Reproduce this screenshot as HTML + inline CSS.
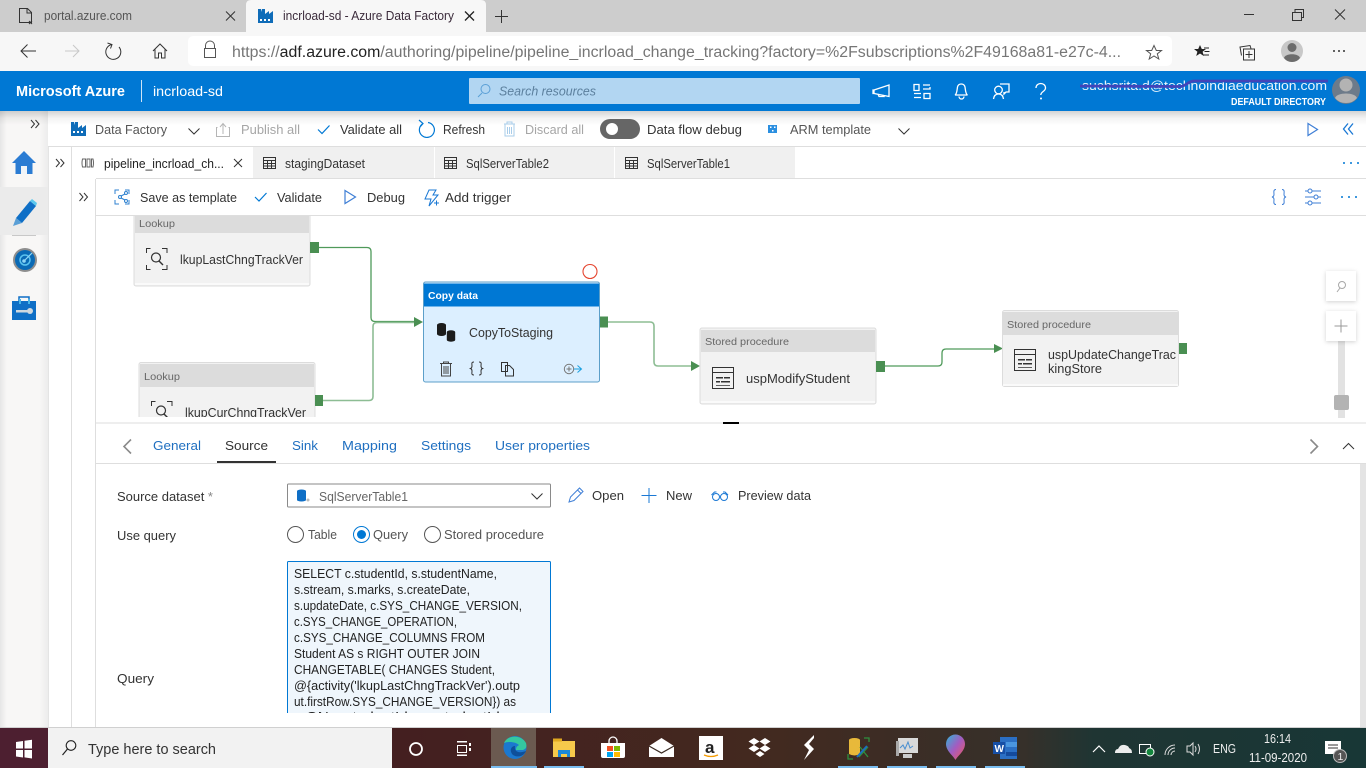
<!DOCTYPE html>
<html><head><meta charset="utf-8"><title>incrload-sd - Azure Data Factory</title>
<style>
html,body{margin:0;padding:0;width:1366px;height:768px;overflow:hidden;background:#fff}
svg{display:block}
text{font-family:"Liberation Sans",sans-serif;font-size:12.5px;fill:#333}
.s{fill:none;stroke:#333;stroke-width:1}
.b{fill:none;stroke:#0078d4;stroke-width:1.2}
.w{fill:none;stroke:#fff;stroke-width:1.3}
.g{fill:#4a8f52}
.l{fill:none;stroke:#4f9a5a;stroke-width:1.3}
.l2{fill:none;stroke:#8dbd94;stroke-width:1.6}
</style></head><body>
<svg width="1366" height="768" viewBox="0 0 1366 768" xmlns="http://www.w3.org/2000/svg">
<defs>
<linearGradient id="tb" x1="0" x2="1" y1="0" y2="0"><stop offset="0" stop-color="#4d1f30"/><stop offset=".3" stop-color="#441f20"/><stop offset=".55" stop-color="#43291f"/><stop offset=".75" stop-color="#36302a"/><stop offset=".8" stop-color="#1f3533"/><stop offset="1" stop-color="#183736"/></linearGradient>
<linearGradient id="sh" x1="0" x2="0" y1="0" y2="1"><stop offset="0" stop-color="#000" stop-opacity=".17"/><stop offset=".5" stop-color="#000" stop-opacity=".05"/><stop offset="1" stop-color="#000" stop-opacity="0"/></linearGradient>
<linearGradient id="sb" x1="0" x2="1" y1="0" y2="0"><stop offset="0" stop-color="#e6e6e6"/><stop offset=".14" stop-color="#f8f7f6"/><stop offset=".82" stop-color="#f8f7f6"/><stop offset="1" stop-color="#ececec"/></linearGradient>
<linearGradient id="pin" x1="0" x2="1" y1="0" y2="1"><stop offset="0" stop-color="#2fb5d8"/><stop offset=".5" stop-color="#a45bc0"/><stop offset="1" stop-color="#f05a5a"/></linearGradient>
<clipPath id="c1"><rect x="96" y="216" width="1270" height="201"/></clipPath>
<clipPath id="c2"><rect x="288" y="562" width="262" height="151"/></clipPath>
</defs>

<!-- browser chrome -->
<rect width="1366" height="32" fill="#cdcdcd"/>
<rect x="0" y="32" width="1366" height="39" fill="#f7f7f7"/>
<path d="M246 32V5q0-5 5-5h230q5 0 5 5v27z" fill="#f7f7f7"/>
<path class="s" d="M19.5 8.5h8l4 4v10h-12zM27 8.500v4.500h4.500" stroke="#666"/>
<path d="M29 21l3 3m0-3l-3 3" class="s"/>
<text x="44" y="20" textLength="88" lengthAdjust="spacingAndGlyphs" style="fill:#555">portal.azure.com</text>
<path class="s" d="M226 11.500l9 9m0-9l-9 9" stroke-width="1.1"/>
<path d="M258 23V9h3l1 3V9h3v5l4-3v3l4-3v12z" fill="#0f6cb8"/><rect x="260" y="19" width="2" height="2" fill="#fff"/><rect x="264" y="19" width="2" height="2" fill="#fff"/><rect x="268" y="19" width="2" height="2" fill="#fff"/>
<text x="283" y="20" textLength="171" lengthAdjust="spacingAndGlyphs" style="fill:#3b2b3b">incrload-sd - Azure Data Factory</text>
<path d="M465 11.500l9 9m0-9l-9 9" fill="none" stroke="#222" stroke-width="1.3"/>
<path class="s" d="M501.500 10v13M495 16.500h13" stroke="#444"/>
<path class="s" d="M1244 14.500h10"/><path class="s" d="M1292.500 12.500h9v8h-9zM1295 12v-2.500h8.500v8H1302"/><path class="s" d="M1335 9.500l10 10m0-10l-10 10"/>
<!-- nav -->
<path class="s" d="M36 51H21M27.500 44.500L21 51l6.500 6.500" stroke="#222"/>
<path d="M79 51H65M73 45l6 6-6 6" fill="none" stroke="#c8c8c8"/>
<path class="s" d="M112 44.500a7.500 7.500 0 1 0 7 2.500M107.500 43l4.500 1.500-1.500 4" stroke="#222"/>
<path class="s" d="M153 51l7-7 7 7M155 49.500v8.500h3.500v-5h3v5h3.500v-8.500" stroke="#222"/>
<rect x="188" y="36" width="984" height="30" rx="5" fill="#fff"/>
<path d="M205.500 48.500v-3a4.500 4.500 0 0 1 9 0v3M204.500 48.500h11v9h-11z" fill="none" stroke="#555"/>
<text x="232" y="57" textLength="889" lengthAdjust="spacingAndGlyphs" style="font-size:15.500px;fill:#767676">https://<tspan fill="#222">adf.azure.com</tspan>/authoring/pipeline/pipeline_incrload_change_tracking?factory=%2Fsubscriptions%2F49168a81-e27c-4...</text>
<path d="M1154 45.500l2.300 5h5.200l-4.200 3.300 1.500 5.200-4.800-3-4.800 3 1.500-5.200-4.200-3.300h5.200z" fill="none" stroke="#555"/>
<path d="M1200 45l1.800 4h4.200l-3.400 2.700 1.200 4.300-3.800-2.500-3.800 2.500 1.200-4.300-3.400-2.700h4.200z" fill="#222"/><path d="M1204 48h5M1204.500 51.500h5M1203 55h6" stroke="#222"/>
<path class="s" d="M1243.500 49h11v11h-11zM1249 51v7M1245.500 54.500h7M1241.500 55.500l-1.500-8.500 10-1.500 1 3" stroke="#222"/>
<circle cx="1292" cy="51" r="11" fill="#c8c8c8"/><circle cx="1292" cy="47.500" r="4.500" fill="#6c6c6c"/><path d="M1284 58c1-5 15-5 16 0q-3 4-8 4t-8-4z" fill="#6c6c6c"/>
<circle cx="1334" cy="51" r="1" fill="#333"/><circle cx="1339" cy="51" r="1" fill="#333"/><circle cx="1344" cy="51" r="1" fill="#333"/>

<!-- azure header -->
<rect y="71" width="1366" height="40" fill="#0078d4"/>
<text x="16" y="96" textLength="109" lengthAdjust="spacingAndGlyphs" style="font-size:14.500px;font-weight:bold;fill:#fff">Microsoft Azure</text>
<rect x="141" y="80" width="1" height="22" fill="#cfe4f6"/>
<text x="153" y="96" textLength="70" lengthAdjust="spacingAndGlyphs" style="font-size:13.500px;fill:#fff">incrload-sd</text>
<rect x="469" y="78" width="391" height="26" rx="1" fill="#b2d6f2"/>
<circle cx="485.500" cy="89" r="4.500" fill="none" stroke="#5a9fd6"/><path d="M482 93l-4 4" stroke="#5a9fd6"/>
<text x="499" y="95.500" textLength="97" lengthAdjust="spacingAndGlyphs" style="font-style:italic;fill:#5b7f9d">Search resources</text>
<path class="w" d="M874 90l15-5v11.500l-15-3zM874 90h-1v3.500h1M878 94l1 2.500h5l-.5-1.500"/>
<path class="w" d="M914 84.500h5v6h-5zM923 85h7M923 89h7v-2M914 93.500h7M924 93.500h6v5h-6zM914 97.500h7"/>
<path class="w" d="M955 95c2-1 2-5 2.500-8 1-4 6.500-4 7.500 0 .5 3 .5 7 2.500 8zM959 96.500a2.500 2.500 0 0 0 5 0"/>
<circle cx="998.500" cy="90" r="3.800" class="w"/><path class="w" d="M993.500 99c.5-3.500 2.500-5 5-5s4.500 1.500 5 5M1000 84h9v8h-3l-2 2v-2"/>
<path class="w" d="M1036 88c0-6 9.500-6 9.500 0 0 3.500-4.700 3.500-4.700 7" stroke-width="1.300"/><circle cx="1041" cy="98.500" r="1" fill="#fff"/>
<text x="1082" y="90" textLength="245" lengthAdjust="spacingAndGlyphs" style="font-size:13px;fill:#eaf4fc">suchsrita.d@technoindiaeducation.com</text>
<path d="M1080 86l100 .5c6 0 8-5.500 14-5.500h134" fill="none" stroke="#4344b8" stroke-width="2.800"/>
<text x="1231" y="105" textLength="95" lengthAdjust="spacingAndGlyphs" style="font-size:10px;font-weight:bold;fill:#fff">DEFAULT DIRECTORY</text>
<circle cx="1346" cy="90" r="14" fill="#6d7b8a"/><circle cx="1346" cy="85" r="6.500" fill="#b3b3b3"/><path d="M1335 98c2-6 20-6 22 0q-4 5-11 5t-11-5z" fill="#b3b3b3"/>

<!-- toolbar -->
<rect x="48" y="111" width="1318" height="35" fill="#fff"/>
<rect x="48" y="146" width="1318" height="1" fill="#dedede"/>

<!-- sidebar -->
<rect y="111" width="48" height="617" fill="url(#sb)"/>
<rect x="0" y="187" width="48" height="48" fill="#ebebeb"/>
<rect x="12" y="235" width="24" height="1" fill="#c8c8c8"/>
<rect y="111" width="1366" height="14" fill="url(#sh)"/>
<path class="s" d="M31 120l3.500 4-3.500 4M35.500 120l3.500 4-3.500 4" stroke="#444"/>
<path d="M12 163l12-12 12 12h-3.500v11h-17v-11z" fill="#2b7cd3"/><rect x="21" y="166" width="6" height="8" fill="#f0f4f8"/>
<path d="M16 218l14-17 6 5-14 17z" fill="#0f6fc6"/><path d="M30 201l2-2 5 4-1 3z" fill="#5ac8ee"/><path d="M16 218l6 5-9 3z" fill="#5a9fd6"/>
<circle cx="25" cy="260" r="12" fill="#8e8e8e"/><circle cx="25" cy="260" r="10" fill="#0a6ab5"/><circle cx="25" cy="260" r="5" fill="none" stroke="#5cc3ee" stroke-width="1.500"/><circle cx="24" cy="261" r="1.800" fill="#8fd6f4"/><path d="M25 260l7-7" stroke="#8fd6f4" stroke-width="1.200"/>
<path d="M12 301h24v19H12z" fill="#0f6fc6"/><path d="M19 301v-4h10v4" fill="none" stroke="#0f6fc6" stroke-width="1.500"/><rect x="16" y="310" width="13" height="2.500" fill="#cfd8df"/><circle cx="30" cy="311" r="3" fill="#cfd8df"/><rect x="19" y="299" width="2" height="5" fill="#4ab5e8"/><rect x="28" y="299" width="2" height="5" fill="#4ab5e8"/>

<!-- columns -->
<rect x="48" y="147" width="24" height="581" fill="#fff"/>
<rect x="48" y="147" width="1" height="581" fill="#e4e4e4"/>
<rect x="71" y="147" width="1" height="581" fill="#dedede"/>
<rect x="95" y="179" width="1" height="549" fill="#dedede"/>
<path class="s" d="M56 159l3.500 4-3.500 4M60.500 159l3.500 4-3.500 4" stroke="#444"/>
<path class="s" d="M79.500 193l3.500 4-3.500 4M84 193l3.500 4-3.500 4" stroke="#444"/>

<!-- toolbar 1 -->
<path d="M71 136v-14h3l1 3v-3h3v6l4-3v3l4-3v11z" fill="#0f6cb8"/><rect x="73" y="131" width="2" height="2" fill="#fff"/><rect x="77" y="131" width="2" height="2" fill="#fff"/><rect x="81" y="131" width="2" height="2" fill="#fff"/>
<text x="95" y="134" textLength="72" lengthAdjust="spacingAndGlyphs" style="fill:#555">Data Factory</text>
<path class="s" d="M188.500 128.500l5.500 5.500 5.500-5.500"/>
<path d="M217.500 127.500h-1v9h13v-9h-1M223 134v-10M220 127l3-3.500 3 3.500" fill="none" stroke="#b5b5b5"/>
<text x="241" y="134" textLength="59" lengthAdjust="spacingAndGlyphs" style="fill:#a6a6a6">Publish all</text>
<path class="b" d="M318 129.500l4 4 7.500-8" stroke-width="1"/>
<text x="340" y="134" textLength="62" lengthAdjust="spacingAndGlyphs">Validate all</text>
<path class="b" d="M423 123.500a7.500 7.500 0 1 0 5-1M419 120l4 3.500-3 3.500" stroke-width="1.100"/>
<text x="443" y="134" textLength="42" lengthAdjust="spacingAndGlyphs">Refresh</text>
<path d="M504 124h11M507 124v-2h5v2M505 124v12h9v-12M507.500 127v7M509.500 127v7M511.500 127v7" fill="none" stroke="#a9cdea"/>
<text x="525" y="134" textLength="59" lengthAdjust="spacingAndGlyphs" style="fill:#a6a6a6">Discard all</text>
<rect x="600" y="119" width="40" height="20" rx="10" fill="#666"/><circle cx="612" cy="129" r="6" fill="#fff"/>
<text x="647" y="134" textLength="95" lengthAdjust="spacingAndGlyphs">Data flow debug</text>
<path d="M768 125h9v8h-9z" fill="#2b8fe0"/><path d="M770 126.500h1.500v1.500H770zM774 126.500h1.500v1.500H774zM772 130h1.500v1.500H772z" fill="#fff"/>
<text x="790" y="134" textLength="81" lengthAdjust="spacingAndGlyphs" style="fill:#555">ARM template</text>
<path class="s" d="M898.500 128.500l5.500 5.500 5.500-5.500"/>
<path d="M1308 123.500l9.500 6-9.500 6z" fill="none" stroke="#3f7fd6" stroke-width="1.200"/>
<path d="M1348 123.500l-4.500 5.500 4.500 5.500M1353 123.500l-4.500 5.500 4.500 5.500" fill="none" stroke="#1a78d4" stroke-width="1.300"/>

<!-- tab row -->
<rect x="72" y="147" width="181" height="32" fill="#fff"/>
<rect x="253" y="147" width="181" height="32" fill="#f0f0f0"/>
<rect x="435" y="147" width="179" height="32" fill="#f0f0f0"/>
<rect x="615" y="147" width="180" height="32" fill="#f0f0f0"/>
<rect x="96" y="178" width="1270" height="1" fill="#dedede"/>
<path d="M82.500 159h3v8h-3q-1-4 0-8zM87 159h3v8h-3zM91.500 159h1.500q1 4 0 8h-1.500z" fill="none" stroke="#666"/>
<text x="104" y="168" textLength="120" lengthAdjust="spacingAndGlyphs" style="fill:#222">pipeline_incrload_ch...</text>
<path class="s" d="M234 159l8 8m0-8l-8 8" stroke="#555"/>
<path class="s" stroke="#666" d="M263.500 157.500h12v11h-12zM263.500 160.500h12M263.500 163.500h12M263.500 166h12M267.500 160.500v8M271.500 160.500v8"/>
<text x="285" y="168" textLength="80" lengthAdjust="spacingAndGlyphs">stagingDataset</text>
<path class="s" stroke="#666" d="M444.500 157.500h12v11h-12zM444.500 160.500h12M444.500 163.500h12M444.500 166h12M448.500 160.500v8M452.500 160.500v8"/>
<text x="466" y="168" textLength="83" lengthAdjust="spacingAndGlyphs">SqlServerTable2</text>
<path class="s" stroke="#666" d="M625.500 157.500h12v11h-12zM625.500 160.500h12M625.500 163.500h12M625.500 166h12M629.500 160.500v8M633.500 160.500v8"/>
<text x="647" y="168" textLength="83" lengthAdjust="spacingAndGlyphs">SqlServerTable1</text>
<circle cx="1344" cy="163" r="1" fill="#0078d4"/><circle cx="1351" cy="163" r="1" fill="#0078d4"/><circle cx="1358" cy="163" r="1" fill="#0078d4"/>

<!-- toolbar 2 -->
<path d="M115 194v-4h4M125 190h4v4M129 200v4h-4M119 204h-4v-4" fill="none" stroke="#2f82d0"/><circle cx="120" cy="197" r="1.500" fill="none" stroke="#2f82d0"/><circle cx="126" cy="193" r="1.500" fill="none" stroke="#2f82d0"/><circle cx="126" cy="201" r="1.500" fill="none" stroke="#2f82d0"/><path d="M121 196l4-2M121 198l4 2" stroke="#2f82d0" fill="none"/>
<text x="140" y="202" textLength="97" lengthAdjust="spacingAndGlyphs">Save as template</text>
<path class="b" d="M255 197l4 4 7.500-8" stroke-width="1"/>
<text x="277" y="202" textLength="45" lengthAdjust="spacingAndGlyphs">Validate</text>
<path d="M345 190.500l10.500 6.500-10.500 6.500z" fill="none" stroke="#3f7fd6" stroke-width="1.200"/>
<text x="367" y="202" textLength="38" lengthAdjust="spacingAndGlyphs">Debug</text>
<path d="M429 190h7l-3 5h5l-9 11 2-7h-6z" fill="none" stroke="#1a78d4"/><path d="M434 203h5M436.500 200.500v5" stroke="#1a78d4"/>
<text x="445" y="202" textLength="66" lengthAdjust="spacingAndGlyphs">Add trigger</text>
<path d="M1276 189.500c-3 0-2 3-2 5s-2 2.500-2 2.500 2 .5 2 2.500-1 5 2 5M1282 189.500c3 0 2 3 2 5s2 2.500 2 2.500-2 .5-2 2.500 1 5-2 5" fill="none" stroke="#3f7fd6"/>
<path d="M1305 191h16M1305 197h16M1305 203h16" stroke="#3f7fd6"/><circle cx="1310" cy="191" r="2" fill="#fff" stroke="#3f7fd6"/><circle cx="1316" cy="197" r="2" fill="#fff" stroke="#3f7fd6"/><circle cx="1310" cy="203" r="2" fill="#fff" stroke="#3f7fd6"/>
<circle cx="1342" cy="197" r="1" fill="#0078d4"/><circle cx="1349" cy="197" r="1" fill="#0078d4"/><circle cx="1356" cy="197" r="1" fill="#0078d4"/>
<rect x="96" y="215" width="1270" height="1" fill="#dedede"/>

<!-- canvas -->
<g clip-path="url(#c1)">
<path class="l" d="M319 247.500h48q4 0 4 4v66q0 4 4 4h40"/>
<path class="l2" d="M323 400.500h46q4 0 4-4v-70q0-4 4-4h38"/>
<path d="M414 317l9 5-9 5z" class="g"/>
<path class="l2" d="M608 322h42q4 0 4 4v36q0 4 4 4h33"/>
<path d="M691 361l9 5-9 5z" class="g"/>
<path class="l" d="M885 366h53q4 0 4-4v-9q0-4 4-4h49"/>
<path d="M994 344l9 4.500-9 4.500z" class="g"/>

<!-- Lookup 1 -->
<rect x="134" y="210" width="176" height="76" rx="2" fill="#f2f2f2" stroke="#dcdcdc"/>
<rect x="135" y="283" width="174" height="2" fill="#fafafa"/>
<rect x="135" y="216" width="174" height="17" fill="#dcdcdc"/>
<text x="139" y="227" textLength="36" lengthAdjust="spacingAndGlyphs" style="font-size:10.500px;fill:#666">Lookup</text>
<path d="M146.500 253v-4.500h4M162 248.500h5v4.500M146.500 265v4.500h4M162 269.500h5v-4.500" fill="none" stroke="#333"/><circle cx="156" cy="257.500" r="4.500" fill="none" stroke="#333" stroke-width="1.200"/><path d="M159 261l4 4" stroke="#333" stroke-width="1.400"/>
<text x="180" y="264" textLength="123" lengthAdjust="spacingAndGlyphs">lkupLastChngTrackVer</text>
<rect x="310" y="242" width="9" height="11" class="g"/>
<!-- Lookup 2 -->
<rect x="139" y="362.500" width="176" height="76" rx="2" fill="#f2f2f2" stroke="#dcdcdc"/>
<rect x="140" y="364" width="174" height="23" fill="#dcdcdc"/>
<text x="144" y="380" textLength="36" lengthAdjust="spacingAndGlyphs" style="font-size:10.500px;fill:#666">Lookup</text>
<path d="M151.500 406v-4.500h4M167 401.500h5v4.500M151.500 418v4.500h4M167 422.500h5v-4.500" fill="none" stroke="#333"/><circle cx="161" cy="410.500" r="4.500" fill="none" stroke="#333" stroke-width="1.200"/><path d="M164 414l4 4" stroke="#333" stroke-width="1.400"/>
<text x="185" y="417" textLength="121" lengthAdjust="spacingAndGlyphs">lkupCurChngTrackVer</text>
<rect x="315" y="395" width="8" height="11" class="g"/>
<!-- Copy data -->
<rect x="423.500" y="282" width="176" height="100" rx="2" fill="#dcefff" stroke="#5c9fc9"/>
<rect x="424" y="283.500" width="175" height="23" fill="#0078d4"/>
<text x="428" y="299" textLength="50" lengthAdjust="spacingAndGlyphs" style="font-size:10.500px;font-weight:bold;fill:#fff">Copy data</text>
<path d="M437 325a4.500 2 0 0 1 9 0v9a4.500 2 0 0 1-9 0z" fill="#1c1c1c"/><path d="M446.500 332a4.500 2 0 0 1 9 0v8a4.500 2 0 0 1-9 0z" fill="#1c1c1c" stroke="#dcefff" stroke-width=".6"/>
<text x="469" y="337" textLength="84" lengthAdjust="spacingAndGlyphs">CopyToStaging</text>
<path d="M440 363.500h12M443.500 363.500v-1.500h5v1.500M441.500 363.500v12.500h9v-12.500M444 366v8M446 366v8M448 366v8" fill="none" stroke="#444"/>
<path d="M474 362c-3 0-2 2-2 4s-1.500 2.500-1.500 2.500 1.500.5 1.500 2.500-1 4 2 4M479 362c3 0 2 2 2 4s1.500 2.500 1.500 2.500-1.500.5-1.500 2.500 1 4-2 4" fill="none" stroke="#333"/>
<path d="M501.500 362.500h6v9h-6zM505.500 365.500h4l4 4v6.500h-8z" fill="#dcefff" stroke="#333"/>
<circle cx="569" cy="369" r="4.700" fill="none" stroke="#777"/><path d="M566.500 369h5M569 366.500v5" stroke="#777"/><path d="M574 369h7M577.500 365.500l4 3.500-4 3.500" fill="none" stroke="#1aa0e0"/>
<rect x="600" y="316.500" width="8" height="11" class="g"/>
<circle cx="590" cy="271.500" r="7" fill="#fff" stroke="#e5452f" stroke-width="1.100"/>
<!-- SP1 -->
<rect x="700" y="328" width="176" height="76" rx="2" fill="#f2f2f2" stroke="#dcdcdc"/>
<rect x="701" y="401" width="174" height="2" fill="#fafafa"/>
<rect x="701" y="330" width="174" height="22" fill="#dcdcdc"/>
<text x="705" y="345" textLength="84" lengthAdjust="spacingAndGlyphs" style="font-size:10.500px;fill:#666">Stored procedure</text>
<path d="M712.500 367.500h21v21h-21zM712.500 372.500h21" fill="none" stroke="#333"/><path d="M716 377h7v1.500h-7zM724 377h6v1.500h-6zM716 381h4v1.500h-4zM721 381h9v1.500h-9zM716 385h14v.800h-14z" fill="#333"/>
<text x="746" y="383" textLength="104" lengthAdjust="spacingAndGlyphs">uspModifyStudent</text>
<rect x="876" y="361" width="9" height="11" class="g"/>
<!-- SP2 -->
<rect x="1002.500" y="310.500" width="176" height="76" rx="2" fill="#f2f2f2" stroke="#dcdcdc"/>
<rect x="1003" y="384" width="175" height="2" fill="#fafafa"/>
<rect x="1003" y="312" width="175" height="23" fill="#dcdcdc"/>
<text x="1007" y="328" textLength="84" lengthAdjust="spacingAndGlyphs" style="font-size:10.500px;fill:#666">Stored procedure</text>
<path d="M1014.500 349.500h21v21h-21zM1014.500 354.500h21" fill="none" stroke="#333"/><path d="M1018 359h7v1.500h-7zM1026 359h6v1.500h-6zM1018 363h4v1.500h-4zM1023 363h9v1.500h-9zM1018 367h14v.800h-14z" fill="#333"/>
<text x="1048" y="359" textLength="128" lengthAdjust="spacingAndGlyphs">uspUpdateChangeTrac</text>
<text x="1048" y="373" textLength="54" lengthAdjust="spacingAndGlyphs">kingStore</text>
<rect x="1179" y="343" width="8" height="11" class="g"/>
</g>
<!-- zoom controls -->
<rect x="1338" y="341" width="7" height="77" fill="#e2e2e2"/>
<rect x="1326" y="271" width="30" height="30" fill="#fff" style="filter:drop-shadow(0 1px 2px rgba(0,0,0,.18))"/>
<circle cx="1342" cy="285" r="3.500" fill="none" stroke="#a8a8a8"/><path d="M1340 288l-3 4" stroke="#a8a8a8"/>
<rect x="1326" y="311" width="30" height="30" fill="#fff" style="filter:drop-shadow(0 1px 2px rgba(0,0,0,.18))"/>
<path d="M1341 319.500v13M1334.500 326h13" stroke="#999"/>
<rect x="1334" y="395" width="15" height="15" rx="2" fill="#b3b3b3"/>

<!-- divider -->
<rect x="96" y="422" width="1270" height="2" fill="#eeeeee"/>
<rect x="723" y="422" width="16" height="2" fill="#000"/>

<!-- bottom tabs -->
<path d="M131 439.500l-7 7 7 7" fill="none" stroke="#8a8a8a" stroke-width="1.600"/>
<text x="153" y="450" textLength="48" lengthAdjust="spacingAndGlyphs" style="fill:#1f6fc0;font-size:13px">General</text>
<text x="225" y="450" textLength="43" lengthAdjust="spacingAndGlyphs" style="fill:#333;font-size:13px">Source</text>
<rect x="217" y="461" width="59" height="2" fill="#333"/>
<text x="292" y="450" textLength="26" lengthAdjust="spacingAndGlyphs" style="fill:#1f6fc0;font-size:13px">Sink</text>
<text x="342" y="450" textLength="55" lengthAdjust="spacingAndGlyphs" style="fill:#1f6fc0;font-size:13px">Mapping</text>
<text x="421" y="450" textLength="50" lengthAdjust="spacingAndGlyphs" style="fill:#1f6fc0;font-size:13px">Settings</text>
<text x="495" y="450" textLength="95" lengthAdjust="spacingAndGlyphs" style="fill:#1f6fc0;font-size:13px">User properties</text>
<rect x="96" y="463" width="1270" height="1" fill="#dedede"/>
<path d="M1310.500 439.500l7 7-7 7" fill="none" stroke="#8a8a8a" stroke-width="1.600"/>
<path d="M1343 449l5.500-5.500 5.500 5.500" fill="none" stroke="#333"/>
<rect x="1360" y="464" width="6" height="264" fill="#e4e4e4"/>

<!-- form -->
<text x="117" y="501" textLength="96" lengthAdjust="spacingAndGlyphs">Source dataset <tspan fill="#888">*</tspan></text>
<rect x="287.500" y="484" width="263" height="23" rx="1" fill="#fff" stroke="#8a8a8a"/>
<path d="M297 491a4.500 1.500 0 0 1 9 0v9a4.500 1.500 0 0 1-9 0z" fill="#0f6fc6"/><circle cx="308" cy="500" r="1.500" fill="#bbb"/>
<text x="319" y="501" textLength="89" lengthAdjust="spacingAndGlyphs" style="fill:#666">SqlServerTable1</text>
<path class="s" d="M531.500 493.500l5.500 5.500 5.500-5.500"/>
<path d="M569 502l1.500-5 9-9 3.500 3.500-9 9z M577.500 490l3.500 3.500" fill="none" stroke="#3f7fd6"/>
<text x="592" y="500" textLength="32" lengthAdjust="spacingAndGlyphs">Open</text>
<path d="M649 488v15M641.500 495.500h15" stroke="#1a78d4"/>
<text x="666" y="500" textLength="26" lengthAdjust="spacingAndGlyphs">New</text>
<circle cx="716" cy="497" r="3.500" fill="none" stroke="#1a78d4"/><circle cx="724" cy="497" r="3.500" fill="none" stroke="#1a78d4"/><path d="M711.500 495l3-3h2M728 495l-3-3h-2" fill="none" stroke="#1a78d4"/>
<text x="738" y="500" textLength="73" lengthAdjust="spacingAndGlyphs">Preview data</text>

<text x="117" y="540" textLength="59" lengthAdjust="spacingAndGlyphs">Use query</text>
<circle cx="295.500" cy="534.500" r="8" fill="#fff" stroke="#555"/>
<text x="308" y="539" textLength="29" lengthAdjust="spacingAndGlyphs" style="fill:#555">Table</text>
<circle cx="361.500" cy="534.500" r="8" fill="#fff" stroke="#0078d4"/><circle cx="361.500" cy="534.500" r="4.500" fill="#0078d4"/>
<text x="373" y="539" textLength="35" lengthAdjust="spacingAndGlyphs" style="fill:#555">Query</text>
<circle cx="432.500" cy="534.500" r="8" fill="#fff" stroke="#555"/>
<text x="444" y="539" textLength="100" lengthAdjust="spacingAndGlyphs" style="fill:#555">Stored procedure</text>

<text x="117" y="683" textLength="37" lengthAdjust="spacingAndGlyphs">Query</text>
<rect x="287.500" y="561.500" width="263" height="170" rx="1" fill="#eff6fc" stroke="#0078d4"/>
<rect x="280" y="713" width="280" height="20" fill="#fff"/>
<g clip-path="url(#c2)">
<text x="294" y="578" textLength="203" lengthAdjust="spacingAndGlyphs" style="fill:#222">SELECT c.studentId, s.studentName,</text>
<text x="294" y="594" textLength="176" lengthAdjust="spacingAndGlyphs" style="fill:#222">s.stream, s.marks, s.createDate,</text>
<text x="294" y="610" textLength="228" lengthAdjust="spacingAndGlyphs" style="fill:#222">s.updateDate, c.SYS_CHANGE_VERSION,</text>
<text x="294" y="626" textLength="163" lengthAdjust="spacingAndGlyphs" style="fill:#222">c.SYS_CHANGE_OPERATION,</text>
<text x="294" y="642" textLength="191" lengthAdjust="spacingAndGlyphs" style="fill:#222">c.SYS_CHANGE_COLUMNS FROM</text>
<text x="294" y="658" textLength="186" lengthAdjust="spacingAndGlyphs" style="fill:#222">Student AS s RIGHT OUTER JOIN</text>
<text x="294" y="674" textLength="201" lengthAdjust="spacingAndGlyphs" style="fill:#222">CHANGETABLE( CHANGES Student,</text>
<text x="294" y="690" textLength="226" lengthAdjust="spacingAndGlyphs" style="fill:#222">@{activity('lkupLastChngTrackVer').outp</text>
<text x="294" y="706" textLength="222" lengthAdjust="spacingAndGlyphs" style="fill:#222">ut.firstRow.SYS_CHANGE_VERSION}) as</text>
<text x="294" y="721" textLength="210" lengthAdjust="spacingAndGlyphs" style="fill:#222">c ON s.studentId = c.studentId;</text>
</g>

<!-- taskbar -->
<rect y="727" width="1366" height="1" fill="#d0d0d0"/>
<rect y="728" width="1366" height="40" fill="url(#tb)"/>
<rect x="0" y="728" width="48" height="40" fill="#4d1f30"/>
<path d="M16 742l7-1v7.500h-7zM24.500 740.800l7.500-1.100v8.800h-7.500zM16 750h7v7.500l-7-1zM24.500 750H32v8.500l-7.500-1.100z" fill="#fff"/>
<rect x="48" y="728" width="344" height="40" fill="#f2f2f2"/>
<circle cx="71" cy="745.500" r="4.800" fill="none" stroke="#222" stroke-width="1.100"/><path d="M67.500 749l-5 6" stroke="#222" stroke-width="1.200"/>
<text x="88" y="754" textLength="128" lengthAdjust="spacingAndGlyphs" style="font-size:14.500px;fill:#333">Type here to search</text>
<circle cx="416" cy="749" r="6" fill="none" stroke="#fff" stroke-width="1.800"/>
<path d="M457 741h10v1.500h-10zM457 754.500h10v1.500h-10z" fill="#fff"/><rect x="457.500" y="745.500" width="9" height="7" fill="none" stroke="#fff"/><rect x="469" y="743" width="2" height="3" fill="#fff"/><rect x="469" y="748" width="2" height="3" fill="#fff"/>
<rect x="491" y="728" width="45" height="40" fill="#6b5a50"/>
<rect x="491" y="766" width="46" height="2" fill="#79bdf0"/><rect x="544" y="766" width="40" height="2" fill="#79bdf0"/>
<rect x="838" y="766" width="40" height="2" fill="#79bdf0"/><rect x="887" y="766" width="40" height="2" fill="#79bdf0"/><rect x="936" y="766" width="40" height="2" fill="#79bdf0"/><rect x="985" y="766" width="40" height="2" fill="#79bdf0"/>
<circle cx="515" cy="747.500" r="11.500" fill="#1b78cf"/><path d="M504 743c3-8 17-9 22 0 1 4 0 6-3 7h-7c0-4 2-4 3-5-3-3-10-4-15-2z" fill="#34c7a0"/><path d="M513 755c-4-4-2-9 2-9-1 5 3 8 11 5-2 5-8 7-13 4z" fill="#0e4f9a"/>
<rect x="553" y="741" width="22" height="16" fill="#f6c94b"/><rect x="553" y="738.500" width="9" height="3" fill="#e0a820"/><path d="M558 750h12v7h-12z" fill="#1c88d8"/><rect x="561" y="754" width="6" height="3" fill="#f6c94b"/>
<path d="M601 743h24v13q0 2-2 2h-20q-2 0-2-2z" fill="#fff"/><path d="M609 743v-2a4 4 0 0 1 8 0v2" fill="none" stroke="#fff" stroke-width="1.300"/><rect x="607" y="746" width="6" height="5" fill="#f25022"/><rect x="614" y="746" width="6" height="5" fill="#7fba00"/><rect x="607" y="752" width="6" height="5" fill="#00a4ef"/><rect x="614" y="752" width="6" height="5" fill="#ffb900"/>
<path d="M649 746l12.500-8 12.500 8v11h-25z" fill="#fff"/><path d="M649 746l12.500 7 12.500-7" fill="none" stroke="#3a2a22" stroke-width="1.200"/>
<rect x="699" y="736" width="24" height="24" fill="#fff"/>
<text x="705" y="753" style="font-size:17px;font-weight:bold;fill:#222">a</text><path d="M704 755q7 3 14 0" fill="none" stroke="#f49b00" stroke-width="1.300"/>
<path d="M754 738l5.500 3.500-5.500 3.500-5.500-3.500zM765 738l5.500 3.500-5.500 3.500-5.500-3.500zM754 745l5.500 3.500-5.500 3.500-5.500-3.500zM765 745l5.500 3.500-5.500 3.500-5.500-3.500zM760 751l4.500 3-4.500 3-4.500-3z" fill="#fff"/>
<path d="M814 735l-10 10 5 5-5 10 10-11-5-5 5-6z" fill="#fff"/>
<path d="M849 740a5.500 2 0 0 1 11 0v14q-5.500 3-11 0z" fill="#e8b93a"/><path d="M848 754v5h5M864 738h5v4M859 757l9-10M860 747l8 10" fill="none" stroke="#2f8f3e" stroke-width="1.300"/><path d="M857 757l10-11" stroke="#1c6fc0" stroke-width="2"/>
<rect x="898" y="738" width="20" height="15" fill="#d9d9d9"/><path d="M900 748l3-3 2 4 3-7 2 6 3-2" fill="none" stroke="#4a8fd0"/><path d="M896 741h3v15h-3z" fill="#aaa"/><rect x="903" y="754" width="9" height="4" fill="#ccc"/>
<path d="M955.500 760c-2-4-9.500-9-9.500-16a9.500 9.500 0 0 1 19 0c0 7-7.500 12-9.500 16z" fill="url(#pin)"/>
<rect x="1000" y="737" width="17" height="22" fill="#2b6fc4"/><rect x="1006" y="742" width="11" height="5" fill="#4a96e0"/><rect x="1006" y="752" width="11" height="4" fill="#144a9c"/><rect x="993" y="742" width="12" height="12" fill="#174fa6"/>
<text x="994.500" y="752" style="font-size:10px;font-weight:bold;fill:#fff">W</text>
<path d="M1093 752l6-6 6 6" fill="none" stroke="#fff" stroke-width="1.200"/>
<path d="M1115 753q0-4 3-4 2-5 7-4 4 1 4 3 3 1 3 5z" fill="#ececec"/>
<rect x="1139.500" y="744.500" width="11" height="9" fill="none" stroke="#fff"/><circle cx="1150" cy="752" r="4" fill="#13863d" stroke="#fff"/>
<path d="M1165 755a10 10 0 0 1 10-10M1168 755a7 7 0 0 1 7-7M1171 755a4 4 0 0 1 4-4" fill="none" stroke="#ddd"/>
<path d="M1187 746h3l3-3v12l-3-3h-3zM1195 746q2 3 0 6M1198 744q3 5 0 10" fill="none" stroke="#ddd"/>
<text x="1213" y="753" textLength="23" lengthAdjust="spacingAndGlyphs" style="font-size:13px;fill:#eee">ENG</text>
<text x="1264" y="743" textLength="27" lengthAdjust="spacingAndGlyphs" style="font-size:13px;fill:#eee">16:14</text>
<text x="1249" y="762" textLength="58" lengthAdjust="spacingAndGlyphs" style="font-size:13px;fill:#eee">11-09-2020</text>
<path d="M1325 741h16v13h-16z" fill="#fff"/><path d="M1328 745h10M1328 748h10" stroke="#333"/>
<circle cx="1340" cy="756" r="6.500" fill="#555" stroke="#bbb"/><text x="1337.500" y="760" style="font-size:10.500px;fill:#eee">1</text>
</svg>
</body></html>
